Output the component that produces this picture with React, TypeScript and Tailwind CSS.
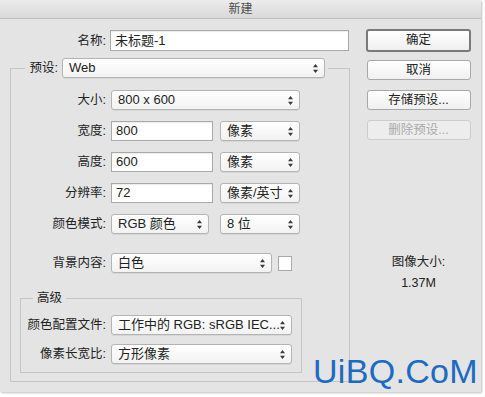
import React from 'react';

const font = "font-['Liberation_Sans','Noto_Sans_CJK_SC',sans-serif]";

function Arrows() {
  return (
    <svg width="5" height="9" viewBox="0 0 5 9" className="shrink-0">
      <path d="M2.5 0L5 3.3H0z M2.5 9L0 5.7h5z" fill="#3a3a3a" />
    </svg>
  );
}

function Select({ value, className = '' }: { value: string; className?: string }) {
  return (
    <div
      className={`flex h-[20px] items-center justify-between rounded-[3px] border border-[#b4b4b4] bg-gradient-to-b from-white to-[#f2f2f2] pl-[6px] pr-[6px] text-[13px] text-[#222] shadow-[0_1px_0_rgba(0,0,0,0.06)] ${className}`}
    >
      <span className="whitespace-nowrap leading-[18px]">{value}</span>
      <Arrows />
    </div>
  );
}

function Input({ value, className = '' }: { value: string; className?: string }) {
  return (
    <div
      className={`flex items-center border border-[#a9a9a9] bg-white pl-[4px] text-[13px] text-[#222] shadow-[inset_0_1px_1px_rgba(0,0,0,0.08)] ${className}`}
    >
      {value}
    </div>
  );
}

function Label({ text, className = '' }: { text: string; className?: string }) {
  return <span className={`shrink-0 text-right text-[12.5px] leading-[20px] text-[#222] ${className}`}>{text}</span>;
}

function Button({ text, primary, disabled }: { text: string; primary?: boolean; disabled?: boolean }) {
  return (
    <div
      className={
        primary
          ? 'flex h-[23px] w-[105px] items-center justify-center rounded-[3px] border-2 border-[#7a7a7a] bg-gradient-to-b from-white to-[#efefef] text-[12.5px] text-[#222]'
          : disabled
          ? 'flex h-[20px] w-[104px] items-center justify-center rounded-[3px] border border-[#cdcdcd] bg-[#ededed] text-[12.5px] text-[#aaaaaa]'
          : 'flex h-[20px] w-[104px] items-center justify-center rounded-[3px] border border-[#a8a8a8] bg-gradient-to-b from-white to-[#f0f0f0] text-[12.5px] text-[#222]'
      }
    >
      {text}
    </div>
  );
}

export default function App() {
  return (
    <div className={`relative h-[397px] w-[485px] overflow-hidden bg-white ${font}`}>
      <div className="flex h-[392px] w-[481px] flex-col bg-[#e4e4e4] shadow-[1px_1px_2px_rgba(0,0,0,0.25)]">
        {/* title bar */}
        <div className="flex h-[19px] shrink-0 items-center justify-center border-b border-[#bdbdbd] bg-gradient-to-b from-[#ececec] to-[#d9d9d9] text-[12px] text-[#4d4d4d]">
          新建
        </div>

        <div className="flex">
          {/* left column */}
          <div className="w-[366px] shrink-0">
            <div className="mt-[11px] flex items-center">
              <Label text="名称:" className="w-[106px]" />
              <Input value="未标题-1" className="ml-[4px] h-[21px] w-[239px]" />
            </div>

            <fieldset className="ml-[10px] mt-[7px] w-[340px] border border-[#c5c5c5] pb-[8px]">
              <legend className="ml-[14px] pl-[2px] pr-[3px]">
                <div className="flex items-center">
                  <Label text="预设:" className="w-[31px] text-left" />
                  <Select value="Web" className="ml-[4px] w-[263px]" />
                </div>
              </legend>

              <div className="mt-[12px] flex flex-col gap-[11px]">
                <div className="flex items-center">
                  <Label text="大小:" className="w-[95px]" />
                  <Select value="800 x 600" className="ml-[5px] w-[189px]" />
                </div>
                <div className="flex items-center">
                  <Label text="宽度:" className="w-[95px]" />
                  <Input value="800" className="ml-[5px] h-[20px] w-[102px]" />
                  <Select value="像素" className="ml-[7px] w-[80px]" />
                </div>
                <div className="flex items-center">
                  <Label text="高度:" className="w-[95px]" />
                  <Input value="600" className="ml-[5px] h-[20px] w-[102px]" />
                  <Select value="像素" className="ml-[7px] w-[80px]" />
                </div>
                <div className="flex items-center">
                  <Label text="分辨率:" className="w-[95px]" />
                  <Input value="72" className="ml-[5px] h-[20px] w-[102px]" />
                  <Select value="像素/英寸" className="ml-[7px] w-[80px]" />
                </div>
                <div className="flex items-center">
                  <Label text="颜色模式:" className="w-[95px]" />
                  <Select value="RGB 颜色" className="ml-[5px] w-[98px]" />
                  <Select value="8 位" className="ml-[11px] w-[80px]" />
                </div>
              </div>

              <div className="mt-[19px] flex items-center">
                <Label text="背景内容:" className="w-[95px]" />
                <Select value="白色" className="ml-[5px] w-[161px]" />
                <div className="ml-[6px] h-[15px] w-[14px] border border-[#a9a9a9] bg-white" />
              </div>

              <fieldset className="ml-[9px] mt-[16px] w-[282px] border border-[#c5c5c5] pb-[8px]">
                <legend className="ml-[12px] px-[4px] text-[12.5px] leading-[18px] text-[#222]">高级</legend>
                <div className="mt-[8px] flex flex-col gap-[9px]">
                  <div className="flex items-center">
                    <Label text="颜色配置文件:" className="w-[85px] whitespace-nowrap" />
                    <Select value="工作中的 RGB: sRGB IEC..." className="ml-[5px] w-[181px]" />
                  </div>
                  <div className="flex items-center">
                    <Label text="像素长宽比:" className="w-[85px]" />
                    <Select value="方形像素" className="ml-[5px] w-[181px]" />
                  </div>
                </div>
              </fieldset>
            </fieldset>
          </div>

          {/* right column */}
          <div className="flex w-[105px] shrink-0 flex-col items-center pt-[10px]">
            <Button text="确定" primary />
            <div className="mt-[8px]">
              <Button text="取消" />
            </div>
            <div className="mt-[10px]">
              <Button text="存储预设..." />
            </div>
            <div className="mt-[10px]">
              <Button text="删除预设..." disabled />
            </div>
            <div className="mt-[113px] text-center text-[12.5px] leading-[18px] text-[#222]">图像大小:</div>
            <div className="mt-[3px] text-center text-[12.5px] leading-[18px] text-[#222]">1.37M</div>
          </div>
        </div>
      </div>

      {/* watermark */}
      <div className="absolute left-[313px] top-[351px] text-[34px] leading-[40px] tracking-[0.3px] text-[#1c6bc3]">UiBQ.CoM</div>
    </div>
  );
}
